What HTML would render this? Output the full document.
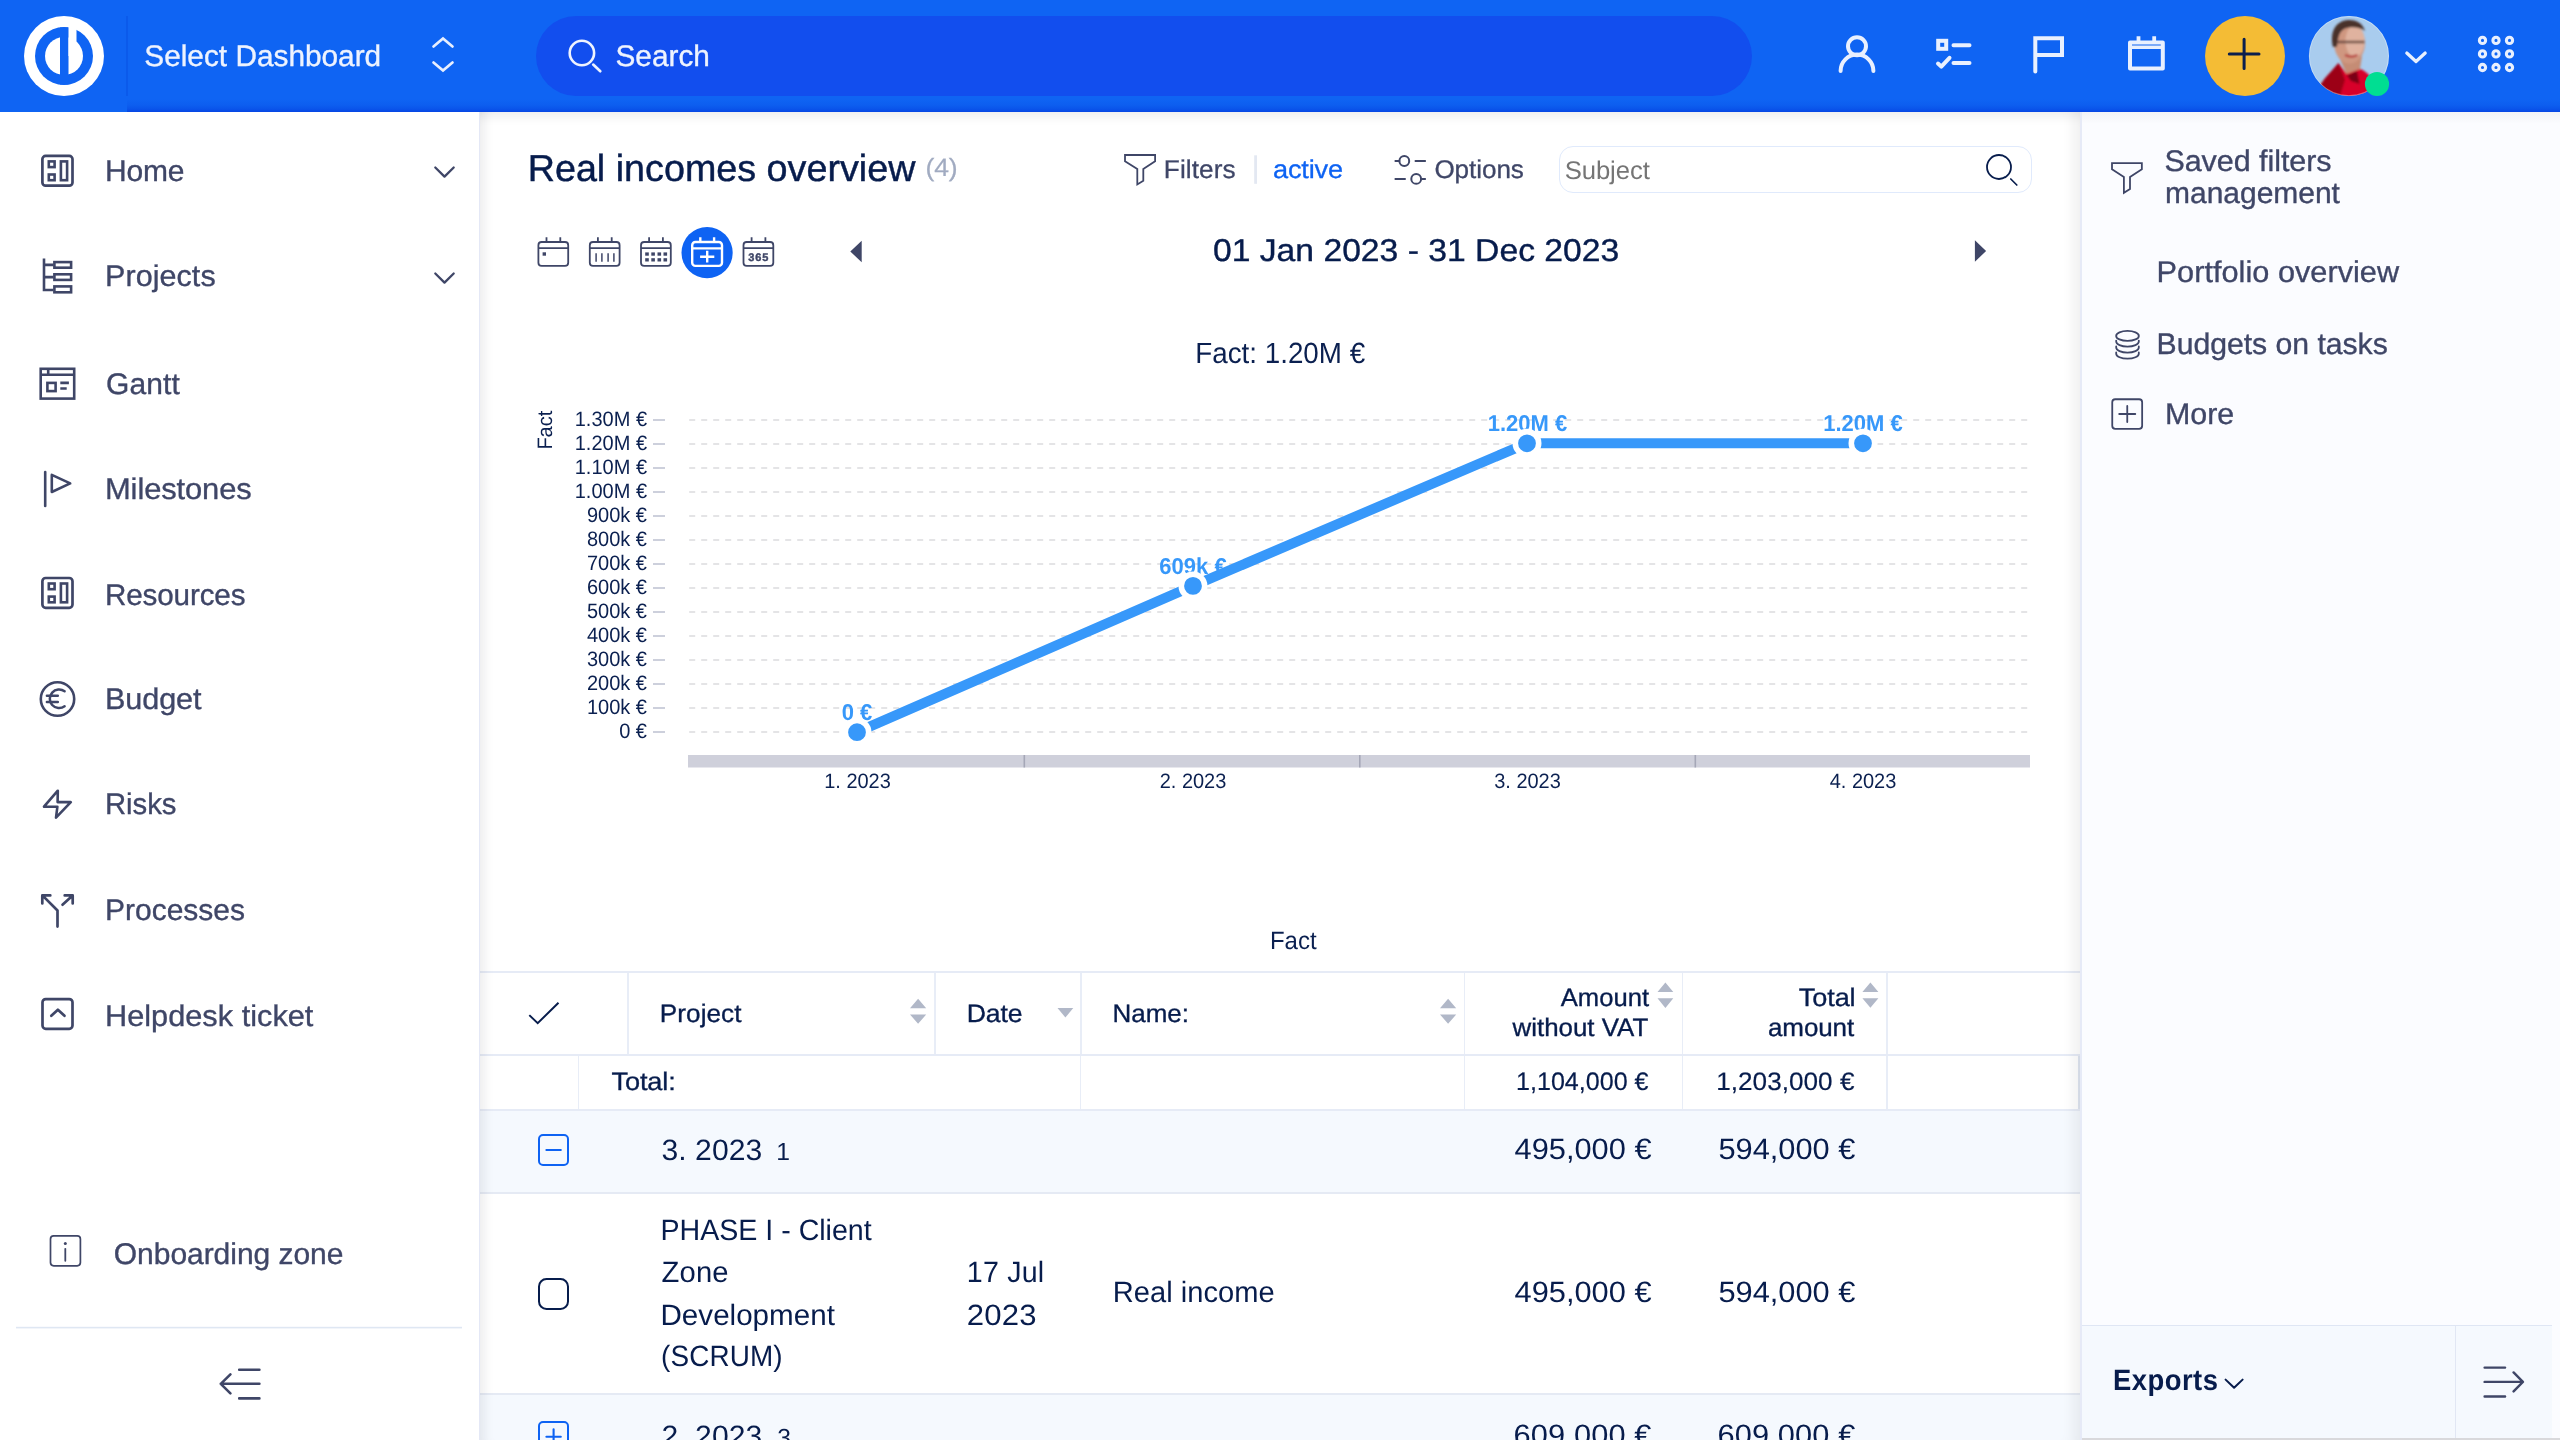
<!DOCTYPE html>
<html lang="en">
<head>
<meta charset="utf-8">
<title>Real incomes overview</title>
<style>
*{box-sizing:border-box;margin:0;padding:0}
html,body{width:2560px;height:1440px;overflow:hidden;background:#fff;font-family:"Liberation Sans",sans-serif}
.t{position:absolute;white-space:pre;line-height:1;font-family:"Liberation Sans",sans-serif}
.tl{position:absolute;left:0;top:0;width:100%;height:100%;will-change:transform;text-rendering:geometricPrecision}
svg{will-change:transform;text-rendering:geometricPrecision}
.abs{position:absolute}
svg{position:absolute;left:0;top:0;overflow:visible}
#top{position:absolute;left:0;top:0;width:2560px;height:112px;background:linear-gradient(#0f64f3 0,#0f64f3 99px,#0d5eef 105px,#0a54ea 109px,#0646e4 112px);z-index:5}
#side{position:absolute;left:0;top:112px;width:480px;height:1328px;background:#fff;border-right:1.400px solid #e4e8f6;z-index:3}
#main{position:absolute;left:480px;top:112px;width:1600px;height:1328px;background:#fff;overflow:hidden;z-index:1}
#right{position:absolute;left:2080px;top:112px;width:480px;height:1328px;background:#fbfcff;z-index:3}
</style>
</head>
<body>

<header id="top">
  <svg width="2560" height="112" viewBox="0 0 2560 112">
    <rect x="0" y="96" width="127" height="16" fill="#0f64f3"/>
    <!-- logo -->
    <circle cx="64" cy="56" r="40" fill="#fff"/>
    <circle cx="64" cy="56" r="29" fill="#0f64f3"/>
    <circle cx="64" cy="56" r="19" fill="#fff"/>
    <rect x="60" y="27.4" width="8.5" height="57.2" fill="#0f64f3"/>
    <rect x="68.5" y="24" width="8" height="32" fill="#fff"/>
    <!-- divider -->
    <rect x="126" y="16" width="2" height="80" fill="#0a52e4" opacity=".55"/>
    <!-- select chevrons -->
    <path d="M433.5 46.5 L443 38.5 L452.500 46.5 M433.5 62.5 L443 70.500 L452.500 62.5" fill="none" stroke="#e8effe" stroke-width="2.7" stroke-linecap="round" stroke-linejoin="miter"/>
    <!-- search pill -->
    <rect x="536" y="16" width="1216" height="80" rx="40" fill="#124eee"/>
    <circle cx="581.9" cy="53" r="12.2" fill="none" stroke="#eef3fe" stroke-width="2.6"/>
    <path d="M593.2 64.6 L600.3 71.2" stroke="#eef3fe" stroke-width="2.7" stroke-linecap="round"/>
    <!-- user -->
    <g fill="none" stroke="#e9f0fe" stroke-width="4" stroke-linecap="round">
      <circle cx="1857" cy="46.3" r="9"/>
      <path d="M1840.600 71 A16.4 16.4 0 0 1 1873.400 71"/>
    </g>
    <!-- tasks -->
    <g fill="none" stroke="#e9f0fe" stroke-width="4" stroke-linecap="round" stroke-linejoin="round">
      <rect x="1938.200" y="40.800" width="8" height="8" stroke-linejoin="miter"/>
      <path d="M1953.500 45.2 H1969.500 M1953.500 63.1 H1969.500"/>
      <path d="M1938 63.500 L1941.300 66.600 L1949.500 57.8"/>
    </g>
    <!-- flag -->
    <path d="M2035.300 71.500 V38.3 H2062 V54.9 H2035.300" fill="none" stroke="#e9f0fe" stroke-width="4" stroke-linecap="round" stroke-linejoin="miter"/>
    <!-- calendar -->
    <g fill="none" stroke="#e9f0fe" stroke-width="4" stroke-linejoin="round">
      <rect x="2130" y="42.5" width="32.8" height="26.1"/>
      <path d="M2130 47.2 H2162.800" stroke-width="3.4"/>
      <path d="M2138.500 36.3 V42 M2154.200 36.3 V42" stroke-width="3.800"/>
    </g>
    <!-- plus -->
    <circle cx="2245" cy="56" r="40" fill="#f4bc35"/>
    <path d="M2229.300 54 H2259 M2244.100 39.200 V68.600" stroke="#0b1f4d" stroke-width="3" stroke-linecap="round"/>
    <!-- avatar -->
    <defs>
      <clipPath id="avc"><circle cx="2349" cy="56" r="40"/></clipPath>
      <filter id="avb" x="-10%" y="-10%" width="120%" height="120%"><feGaussianBlur stdDeviation="1.3"/></filter>
    </defs>
    <g clip-path="url(#avc)">
      <rect x="2305" y="12" width="90" height="90" fill="#a9ccee"/>
      <g filter="url(#avb)">
        <path d="M2316 102 L2321 84 C2326 76 2333 70 2338.500 63 L2346 73 L2358.500 68 C2365 70.500 2370 75 2374 81 L2394 102 Z" fill="#d8002a"/>
        <path d="M2316 102 L2321 84 C2326 76 2333 70 2338.500 63 L2345 80 L2338 102 Z" fill="#9c0016"/>
        <path d="M2347 75.500 L2357 71 L2359.500 84 L2351 81 Z" fill="#7a0012"/>
        <path d="M2338.500 56 L2362 56 L2360 69 L2346.500 74 Z" fill="#c58c75"/>
        <ellipse cx="2349.500" cy="43" rx="15.500" ry="20.500" fill="#cf9780"/>
        <ellipse cx="2355" cy="41" rx="9.500" ry="16" fill="#e6bba9" opacity=".75"/>
        <path d="M2333 47 C2329.500 31 2336 21 2348 20 C2357 19.500 2363 24 2365 31 C2359 26.500 2351 26.500 2345 28.500 C2339 31 2338 38 2337 47 Z" fill="#49312a"/>
        <path d="M2337 42 H2364.500" stroke="#5b3e36" stroke-width="2.600" opacity=".8"/>
        <path d="M2345 55 Q2351 58.200 2357.500 55" stroke="#b8423f" stroke-width="2.200" fill="none"/>
      </g>
    </g>
    <circle cx="2348.900" cy="56" r="39.600" fill="none" stroke="#fff" stroke-opacity=".35" stroke-width="1"/>
    <circle cx="2377" cy="84" r="12.100" fill="#00de92"/>
    <path d="M2406.800 53 L2416 61.500 L2425.200 53" fill="none" stroke="#e9f0fe" stroke-width="3.200" stroke-linecap="round" stroke-linejoin="round"/>
    <!-- apps grid -->
    <g fill="none" stroke="#e9f0fe" stroke-width="3.100">
      <circle cx="2482.500" cy="40.4" r="3.100"/><circle cx="2496" cy="40.4" r="3.100"/><circle cx="2509.500" cy="40.4" r="3.100"/>
      <circle cx="2482.500" cy="53.9" r="3.100"/><circle cx="2496" cy="53.9" r="3.100"/><circle cx="2509.500" cy="53.9" r="3.100"/>
      <circle cx="2482.500" cy="67.500" r="3.100"/><circle cx="2496" cy="67.500" r="3.100"/><circle cx="2509.500" cy="67.500" r="3.100"/>
    </g>
  </svg>
<div class="tl">
<span class="t" style="left:144.3px;top:42px;font-size:29.8px;letter-spacing:0.00px;color:#eef3fe;-webkit-text-stroke:0.35px #eef3fe;">Select Dashboard</span>
<span class="t" style="left:615.5px;top:42px;font-size:29.8px;letter-spacing:0.00px;color:#eef3fe;-webkit-text-stroke:0.35px #eef3fe;">Search</span>
</div>
</header>

<aside id="side">
  <svg width="480" height="1328" viewBox="0 112 480 1328">
    <g fill="none" stroke="#3f4667" stroke-width="2.700" stroke-linecap="round" stroke-linejoin="round">
      <!-- home -->
      <rect x="42.400" y="155.900" width="30.100" height="29.800" rx="3.200"/>
      <g stroke-width="2.600" stroke-linejoin="miter"><rect x="48.800" y="161.400" width="5.800" height="5.700"/><rect x="48.800" y="174.500" width="5.800" height="5.700"/><rect x="60.900" y="161.400" width="6.200" height="18.800"/></g>
      <path d="M435.300 167.500 L444.500 176.600 L453.700 167.500" stroke-width="2.300"/>
      <!-- projects -->
      <g stroke-width="2.600" stroke-linejoin="miter">
        <path d="M44 258.600 V290 H53.500 M44 264.900 H53.500 M44 277.100 H53.500" stroke-linecap="butt"/>
        <rect x="54.400" y="262.100" width="16.700" height="5.600"/><rect x="54.400" y="274.300" width="16.700" height="5.600"/><rect x="54.400" y="286.400" width="16.700" height="5.900"/>
      </g>
      <path d="M435.300 273.500 L444.500 282.600 L453.700 273.500" stroke-width="2.300"/>
      <!-- gantt -->
      <g stroke-width="2.600" stroke-linejoin="miter" stroke-linecap="butt">
        <rect x="40.700" y="368.800" width="33.500" height="29.800"/>
        <path d="M40.700 374.800 H74.200 M48.200 368.800 V374.800"/>
        <rect x="47.400" y="382.900" width="8.200" height="8.200"/>
        <path d="M60.300 382.900 H68.900 M60.300 388.500 H66.700"/>
      </g>
      <!-- milestones -->
      <path d="M45.200 472 V506" stroke-width="2.600"/>
      <path d="M51.800 474.900 L70.200 483.400 L51.800 492 Z" stroke-width="2.600"/>
      <!-- resources -->
      <rect x="42.400" y="578" width="30.100" height="29.800" rx="3.200"/>
      <g stroke-width="2.600" stroke-linejoin="miter"><rect x="48.800" y="583.500" width="5.800" height="5.700"/><rect x="48.800" y="596.600" width="5.800" height="5.700"/><rect x="60.900" y="583.500" width="6.200" height="18.800"/></g>
      <!-- budget -->
      <circle cx="57.500" cy="699" r="16.700" stroke-width="2.600"/>
      <path d="M64.600 691.300 A9.300 9.300 0 1 0 64.600 706.300 M46.900 695.800 H57.800 M46.900 701.900 H57.800" stroke-width="2.500"/>
      <!-- risks -->
      <path d="M57.800 790.700 L44 806.700 H57.400 L56 817.700 L70.800 802.100 H57.600 Z" stroke-width="2.600"/>
      <!-- processes -->
      <path d="M57.500 926.600 V910.500 L42.900 895.900 M62.500 904.700 L72.100 895.900 M42.300 903.400 V895.400 H50.300 M72.700 903.400 V895.400 H64.700" stroke-width="2.700"/>
      <!-- helpdesk -->
      <rect x="42.500" y="999.100" width="30" height="29.700" rx="3.200" stroke-width="2.700"/>
      <path d="M51.300 1015.800 L57.900 1009.700 L64.500 1015.800" stroke-width="2.700"/>
      <!-- onboarding -->
      <rect x="50.500" y="1235.800" width="29.900" height="30" rx="3.200" stroke-width="1.700"/>
      <path d="M65.300 1248.800 V1260.800" stroke-width="1.800"/>
      <circle cx="65.300" cy="1243.500" r="1.500" fill="#3f4667" stroke="none"/>
      <!-- collapse -->
      <path d="M239.200 1369.700 H259.400 M239.200 1398.400 H259.400 M220.800 1383.800 H259.400 M230.400 1374.300 L220.800 1383.800 L230.400 1393.300" stroke-width="2.600"/>
    </g>
    <rect x="16" y="1326.800" width="446" height="1.600" fill="#dfe7f3"/>
  </svg>

<div class="tl">
<span class="t" style="left:105.0px;top:45px;font-size:30.0px;letter-spacing:-0.17px;color:#3f4667;transform:scaleY(0.9935);transform-origin:0 24px;-webkit-text-stroke:0.35px #3f4667;">Home</span>
<span class="t" style="left:105.0px;top:149px;font-size:30.5px;letter-spacing:0.07px;color:#3f4667;transform:scaleY(0.9767);transform-origin:0 25px;-webkit-text-stroke:0.35px #3f4667;">Projects</span>
<span class="t" style="left:106.0px;top:258px;font-size:30.0px;letter-spacing:0.12px;color:#3f4667;transform:scaleY(0.9931);transform-origin:0 24px;-webkit-text-stroke:0.35px #3f4667;">Gantt</span>
<span class="t" style="left:105.0px;top:362px;font-size:30.9px;letter-spacing:-0.11px;color:#3f4667;transform:scaleY(0.9653);transform-origin:0 25px;-webkit-text-stroke:0.35px #3f4667;">Milestones</span>
<span class="t" style="left:105.0px;top:469px;font-size:29.6px;letter-spacing:-0.12px;color:#3f4667;transform:scaleY(1.0072);transform-origin:0 24px;-webkit-text-stroke:0.35px #3f4667;">Resources</span>
<span class="t" style="left:105.0px;top:572px;font-size:30.6px;letter-spacing:-0.10px;color:#3f4667;transform:scaleY(0.9735);transform-origin:0 25px;-webkit-text-stroke:0.35px #3f4667;">Budget</span>
<span class="t" style="left:105.0px;top:678px;font-size:29.3px;letter-spacing:-0.05px;color:#3f4667;transform:scaleY(1.0174);transform-origin:0 24px;-webkit-text-stroke:0.35px #3f4667;">Risks</span>
<span class="t" style="left:105.0px;top:784px;font-size:30.0px;letter-spacing:0.00px;color:#3f4667;transform:scaleY(0.9927);transform-origin:0 24px;-webkit-text-stroke:0.35px #3f4667;">Processes</span>
<span class="t" style="left:105.0px;top:889px;font-size:30.7px;letter-spacing:0.02px;color:#3f4667;transform:scaleY(0.9695);transform-origin:0 25px;-webkit-text-stroke:0.35px #3f4667;">Helpdesk ticket</span>
<span class="t" style="left:113.8px;top:1128px;font-size:30.0px;letter-spacing:-0.04px;color:#3f4667;transform:scaleY(0.9982);transform-origin:0 24px;-webkit-text-stroke:0.35px #3f4667;">Onboarding zone</span>
</div>
</aside>

<main id="main">
  <!-- subject search input -->
  <div class="abs" style="left:1078.800px;top:33.700px;width:473.300px;height:47.700px;border:1.600px solid #e0eafc;border-radius:14px;background:#fff"></div>

  <!-- table backgrounds / borders -->
  <section id="tbl">
    <div class="abs" style="left:0;top:859px;width:1600px;height:2px;background:#e6ebf6"></div>
    <div class="abs" style="left:0;top:942px;width:1600px;height:2px;background:#e6ebf6"></div>
    <div class="abs" style="left:0;top:996.500px;width:1600px;height:2px;background:#e6ebf6"></div>
    <div class="abs" style="left:0;top:998.500px;width:1600px;height:81.500px;background:#f5f9fe"></div>
    <div class="abs" style="left:0;top:1080px;width:1600px;height:1.600px;background:#e5eaf4"></div>
    <div class="abs" style="left:0;top:1281px;width:1600px;height:1.600px;background:#e5eaf4"></div>
    <div class="abs" style="left:0;top:1282.600px;width:1600px;height:46px;background:#f5f9fe"></div>
    <!-- header vertical dividers -->
    <div class="abs" style="left:147.200px;top:861px;width:1.700px;height:81px;background:#e8edf7"></div>
    <div class="abs" style="left:454.200px;top:861px;width:1.700px;height:81px;background:#e8edf7"></div>
    <div class="abs" style="left:600.400px;top:861px;width:1.700px;height:81px;background:#e8edf7"></div>
    <div class="abs" style="left:983.700px;top:861px;width:1.700px;height:81px;background:#e8edf7"></div>
    <div class="abs" style="left:1201.600px;top:861px;width:1.700px;height:81px;background:#e8edf7"></div>
    <div class="abs" style="left:1406.300px;top:861px;width:1.700px;height:81px;background:#e8edf7"></div>
    <!-- total row vertical dividers -->
    <div class="abs" style="left:97.500px;top:944px;width:1.700px;height:52.500px;background:#e8edf7"></div>
    <div class="abs" style="left:599.700px;top:944px;width:1.700px;height:52.500px;background:#e8edf7"></div>
    <div class="abs" style="left:983.700px;top:944px;width:1.700px;height:52.500px;background:#e8edf7"></div>
    <div class="abs" style="left:1201.600px;top:944px;width:1.700px;height:52.500px;background:#e8edf7"></div>
    <div class="abs" style="left:1406.300px;top:944px;width:1.700px;height:52.500px;background:#e8edf7"></div>
    <div class="abs" style="left:1598.200px;top:944px;width:1.700px;height:52.500px;background:#dfe5f1"></div>
    <!-- group toggles + checkbox -->
    <div class="abs" style="left:57.600px;top:1022.100px;width:31.600px;height:31.600px;border:2.200px solid #0e63f3;border-radius:5px"></div>
    <div class="abs" style="left:58px;top:1166.300px;width:31.300px;height:31.300px;border:2px solid #071c4c;border-radius:8.500px;background:#fff"></div>
    <div class="abs" style="left:57.600px;top:1308.800px;width:31.600px;height:31.600px;border:2.200px solid #0e63f3;border-radius:5px"></div>
  </section>
  <!-- inner shadows -->
  <div class="abs" style="left:0;top:0;width:1600px;height:1328px;box-shadow:inset 13px 0 11px -9px rgba(20,20,40,.085),inset 0 13px 11px -9px rgba(20,20,40,.085),inset -17px 0 14px -11px rgba(10,10,20,.065);pointer-events:none"></div>

  <svg width="1600" height="1328" viewBox="480 112 1600 1328">
    <!-- filters funnel -->
    <g fill="none" stroke="#3f4667" stroke-width="1.800" stroke-linecap="round" stroke-linejoin="miter">
      <path d="M1125 155 H1155.100 V161.200 L1143.300 169 V180.800 L1137.300 184.400 V169 L1125 161.200 Z"/>
      <!-- options -->
      <g stroke-width="2"><circle cx="1404.300" cy="161" r="4.900"/><path d="M1395.400 161 H1399.300 M1415.500 161 H1425.100"/>
      <circle cx="1416.200" cy="178.900" r="4.900"/><path d="M1395.400 178.900 H1405 M1421.200 178.900 H1425.100"/></g>
    </g>
    <rect x="1254.200" y="155.300" width="2.800" height="28.500" fill="#e3e8f2"/>
    <!-- subject search icon -->
    <circle cx="1999" cy="167" r="12" fill="none" stroke="#071c4c" stroke-width="1.800"/>
    <path d="M2010.800 179 L2016.800 185" stroke="#071c4c" stroke-width="1.700" stroke-linecap="round"/>

    <!-- period icons -->
    <g fill="none" stroke="#3f4667" stroke-width="1.800" stroke-linejoin="round">
      <g id="cal"><rect x="538.400" y="242" width="29.800" height="23.900" rx="3.200"/><path d="M538.400 248.200 H568.200 M546.500 237.200 V242 M560.300 237.200 V242"/></g>
      <rect x="542.600" y="252.300" width="3.400" height="3.400" fill="#3f4667" stroke="none"/>
      <g transform="translate(51.400 0)"><rect x="538.400" y="242" width="29.800" height="23.900" rx="3.200"/><path d="M538.400 248.200 H568.200 M546.500 237.200 V242 M560.300 237.200 V242"/>
        <path d="M544.700 253.300 V261.700 M550.500 253.300 V261.700 M556.700 253.300 V261.700 M562.500 253.300 V261.700" stroke-width="1.500"/></g>
      <g transform="translate(102.600 0)"><rect x="538.400" y="242" width="29.800" height="23.900" rx="3.200"/><path d="M538.400 248.200 H568.200 M546.500 237.200 V242 M560.300 237.200 V242"/>
        <g fill="#3f4667" stroke="none"><rect x="542.600" y="252.400" width="3.600" height="3.300"/><rect x="548.700" y="252.400" width="3.600" height="3.300"/><rect x="554.900" y="252.400" width="3.600" height="3.300"/><rect x="560.900" y="252.400" width="3.600" height="3.300"/>
        <rect x="542.600" y="258.200" width="3.600" height="3.300"/><rect x="548.700" y="258.200" width="3.600" height="3.300"/><rect x="554.900" y="258.200" width="3.600" height="3.300"/><rect x="560.900" y="258.200" width="3.600" height="3.300"/></g></g>
      <g transform="translate(205.100 0)"><rect x="538.400" y="242" width="29.800" height="23.900" rx="3.200"/><path d="M538.400 248.200 H568.200 M546.500 237.200 V242 M560.300 237.200 V242"/></g>
    </g>
    <circle cx="707.100" cy="252.700" r="25.600" fill="#0e63f3"/>
    <g fill="none" stroke="#fff" stroke-width="2.400" stroke-linejoin="round">
      <rect x="692.200" y="242" width="29.800" height="23.900" rx="3.200"/><path d="M692.200 248.400 H722 M700.300 237.200 V242 M714.100 237.200 V242 M700.100 256.700 H714.300 M707.200 250.800 V262.600"/>
    </g>
    <text x="758.700" y="261.200" font-family="Liberation Sans, sans-serif" font-weight="700" font-size="11" fill="#3f4667" stroke="#3f4667" stroke-width=".4" text-anchor="middle" letter-spacing=".9">365</text>
    <path d="M850.300 251.500 L861.700 240.800 V262.300 Z M1986.100 251 L1974.900 240.200 V261.800 Z" fill="#3f4667"/>

    <!-- chart -->
    <g id="chart" font-family="Liberation Sans, sans-serif" fill="#0b2050">
      <text transform="translate(1280.2 363) scale(0.992 1.045)" font-size="28" text-anchor="middle">Fact: 1.20M €</text>
      <text transform="translate(552 449.6) rotate(-90) scale(1 1.045)" font-size="20">Fact</text>
      <g><text transform="translate(647 426.2) scale(1 1.045)" font-size="20" text-anchor="end">1.30M €</text><text transform="translate(647 450.2) scale(1 1.045)" font-size="20" text-anchor="end">1.20M €</text><text transform="translate(647 474.2) scale(1 1.045)" font-size="20" text-anchor="end">1.10M €</text><text transform="translate(647 498.2) scale(1 1.045)" font-size="20" text-anchor="end">1.00M €</text><text transform="translate(647 522.2) scale(1 1.045)" font-size="20" text-anchor="end">900k €</text><text transform="translate(647 546.2) scale(1 1.045)" font-size="20" text-anchor="end">800k €</text><text transform="translate(647 570.2) scale(1 1.045)" font-size="20" text-anchor="end">700k €</text><text transform="translate(647 594.2) scale(1 1.045)" font-size="20" text-anchor="end">600k €</text><text transform="translate(647 618.2) scale(1 1.045)" font-size="20" text-anchor="end">500k €</text><text transform="translate(647 642.2) scale(1 1.045)" font-size="20" text-anchor="end">400k €</text><text transform="translate(647 666.2) scale(1 1.045)" font-size="20" text-anchor="end">300k €</text><text transform="translate(647 690.2) scale(1 1.045)" font-size="20" text-anchor="end">200k €</text><text transform="translate(647 714.2) scale(1 1.045)" font-size="20" text-anchor="end">100k €</text><text transform="translate(647 738.2) scale(1 1.045)" font-size="20" text-anchor="end">0 €</text></g>
      <path d="M653 420h12M653 444h12M653 468h12M653 492h12M653 516h12M653 540h12M653 564h12M653 588h12M653 612h12M653 636h12M653 660h12M653 684h12M653 708h12M653 732h12" stroke="#cdd0dc" stroke-width="2" fill="none"/>
      <path d="M689.2 420H2030M689.2 444H2030M689.2 468H2030M689.2 492H2030M689.2 516H2030M689.2 540H2030M689.2 564H2030M689.2 588H2030M689.2 612H2030M689.2 636H2030M689.2 660H2030M689.2 684H2030M689.2 708H2030M689.2 732H2030" stroke="#e4e4e6" stroke-width="2" stroke-dasharray="6 6" fill="none"/>
      <rect x="688" y="755" width="1342" height="12.5" fill="#cfd0db"/>
      <path d="M1024.3 755V767.5M1359.8 755V767.5M1695.3 755V767.5" stroke="#a5a7b7" stroke-width="1.6"/>
      <g><text transform="translate(857.5 787.8) scale(1 1.045)" font-size="20" text-anchor="middle">1. 2023</text><text transform="translate(1193 787.8) scale(1 1.045)" font-size="20" text-anchor="middle">2. 2023</text><text transform="translate(1527.5 787.8) scale(1 1.045)" font-size="20" text-anchor="middle">3. 2023</text><text transform="translate(1863 787.8) scale(1 1.045)" font-size="20" text-anchor="middle">4. 2023</text></g>
      <g font-weight="700" fill="#3798fa"><text transform="translate(857 719.6) scale(1 1.045)" font-size="22" text-anchor="middle">0 €</text><text transform="translate(1193 574) scale(1 1.045)" font-size="22" text-anchor="middle">609k €</text><text transform="translate(1527.5 430.9) scale(1 1.045)" font-size="22" text-anchor="middle">1.20M €</text><text transform="translate(1863 430.9) scale(1 1.045)" font-size="22" text-anchor="middle">1.20M €</text></g>
      <path d="M857 732.2 L1193 585.9 L1527 443.3 L1863 443.3" fill="none" stroke="#3798fa" stroke-width="10" stroke-linejoin="round"/>
      <g fill="#3798fa" stroke="#fff" stroke-width="5.6"><circle cx="857" cy="732.2" r="11.7"/><circle cx="1193" cy="585.9" r="11.7"/><circle cx="1527" cy="443.3" r="11.7"/><circle cx="1863" cy="443.3" r="11.7"/></g>
      <text transform="translate(1293.3 949) scale(1 1.045)" font-size="24" text-anchor="middle">Fact</text>
    </g>

    <!-- table icons -->
    <path d="M529.300 1015.100 L537.700 1023.200 L558.500 1002.800" fill="none" stroke="#071c4c" stroke-width="2" stroke-linecap="butt" stroke-linejoin="miter"/>
    <g fill="#b1b8c8">
      <path d="M910 1008.200 L918.100 998.800 L926.200 1008.200 Z M910 1014.500 L918.100 1023.800 L926.200 1014.500 Z"/>
      <path d="M1057.500 1008 L1065.400 1017.500 L1073.300 1008 Z"/>
      <path d="M1440 1008.200 L1448.100 998.800 L1456.200 1008.200 Z M1440 1014.500 L1448.100 1023.800 L1456.200 1014.500 Z"/>
      <path d="M1657.500 992 L1665.400 982.500 L1673.300 992 Z M1657.500 998.300 L1665.400 1007.900 L1673.300 998.300 Z"/>
      <path d="M1862.400 992 L1870.400 982.500 L1878.400 992 Z M1862.400 998.300 L1870.400 1007.700 L1878.400 998.300 Z"/>
    </g>
    <path d="M546.400 1150 H560.800 M546.400 1436.700 H560.800 M553.600 1429.300 V1444" stroke="#0e63f3" stroke-width="2.100" stroke-linecap="round"/>
  </svg>

<div class="tl">
<span class="t" style="left:47.7px;top:38px;font-size:37.7px;letter-spacing:0.01px;color:#071c4c;transform:scaleY(0.994);transform-origin:0 31px;-webkit-text-stroke:0.45px #071c4c;">Real incomes overview</span>
<span class="t" style="left:445.5px;top:42px;font-size:26.6px;letter-spacing:-0.15px;color:#a1abc1;transform:scaleY(0.9408);transform-origin:0 22px;-webkit-text-stroke:0.25px #a1abc1;">(4)</span>
<span class="t" style="left:683.8px;top:44px;font-size:26.2px;letter-spacing:0.10px;color:#3f4667;transform:scaleY(0.9767);transform-origin:0 22px;-webkit-text-stroke:0.3px #3f4667;">Filters</span>
<span class="t" style="left:793.0px;top:43px;font-size:27.2px;letter-spacing:-0.18px;color:#0e63f3;transform:scaleY(0.9398);transform-origin:0 23px;-webkit-text-stroke:0.3px #0e63f3;">active</span>
<span class="t" style="left:954.4px;top:44px;font-size:26.1px;letter-spacing:-0.07px;color:#3f4667;transform:scaleY(0.9817);transform-origin:0 22px;-webkit-text-stroke:0.3px #3f4667;">Options</span>
<span class="t" style="left:1084.7px;top:47px;font-size:25.7px;letter-spacing:-0.10px;color:#757575;transform:scaleY(0.9953);transform-origin:0 20px;">Subject</span>
<span class="t" style="left:732.9px;top:122px;font-size:33.7px;letter-spacing:0.00px;color:#071c4c;transform:scaleY(0.9356);transform-origin:0 27px;-webkit-text-stroke:0.4px #071c4c;">01 Jan 2023 - 31 Dec 2023</span>
<span class="t" style="left:179.8px;top:888px;font-size:26.1px;letter-spacing:0.08px;color:#071c4c;transform:scaleY(0.9686);transform-origin:0 22px;-webkit-text-stroke:0.35px #071c4c;">Project</span>
<span class="t" style="left:486.8px;top:888px;font-size:26.6px;letter-spacing:-0.17px;color:#071c4c;transform:scaleY(0.9524);transform-origin:0 22px;-webkit-text-stroke:0.35px #071c4c;">Date</span>
<span class="t" style="left:632.5px;top:888px;font-size:26.0px;letter-spacing:-0.05px;color:#071c4c;transform:scaleY(0.9749);transform-origin:0 22px;-webkit-text-stroke:0.35px #071c4c;">Name:</span>
<span class="t" style="left:1080.8px;top:874px;font-size:25.6px;letter-spacing:0.00px;color:#071c4c;transform:scaleY(0.9886);transform-origin:0 20px;-webkit-text-stroke:0.35px #071c4c;">Amount</span>
<span class="t" style="left:1032.5px;top:904px;font-size:25.9px;letter-spacing:0.00px;color:#071c4c;transform:scaleY(0.9778);transform-origin:0 20px;-webkit-text-stroke:0.35px #071c4c;">without VAT</span>
<span class="t" style="left:1318.8px;top:871px;font-size:27.1px;letter-spacing:-0.10px;color:#071c4c;transform:scaleY(0.9341);transform-origin:0 23px;-webkit-text-stroke:0.35px #071c4c;">Total</span>
<span class="t" style="left:1288.0px;top:902px;font-size:26.0px;letter-spacing:-0.12px;color:#071c4c;transform:scaleY(0.9719);transform-origin:0 22px;-webkit-text-stroke:0.35px #071c4c;">amount</span>
<span class="t" style="left:131.5px;top:955px;font-size:27.2px;letter-spacing:-0.14px;color:#071c4c;transform:scaleY(0.93);transform-origin:0 23px;-webkit-text-stroke:0.35px #071c4c;">Total:</span>
<span class="t" style="left:1036.0px;top:958px;font-size:25.1px;letter-spacing:0.00px;color:#071c4c;transform:scaleY(1.0077);transform-origin:0 20px;-webkit-text-stroke:0.2px #071c4c;">1,104,000 €</span>
<span class="t" style="left:1236.2px;top:956px;font-size:26.1px;letter-spacing:0.04px;color:#071c4c;transform:scaleY(0.9675);transform-origin:0 22px;-webkit-text-stroke:0.2px #071c4c;">1,203,000 €</span>
<span class="t" style="left:181.5px;top:1024px;font-size:30.1px;letter-spacing:0.05px;color:#071c4c;transform:scaleY(0.9766);transform-origin:0 24px;">3. 2023</span>
<span class="t" style="left:296.3px;top:1029px;font-size:24.7px;letter-spacing:0.00px;color:#071c4c;">1</span>
<span class="t" style="left:1034.5px;top:1022px;font-size:30.8px;letter-spacing:0.00px;color:#071c4c;transform:scaleY(0.9556);transform-origin:0 25px;">495,000 €</span>
<span class="t" style="left:1238.4px;top:1022px;font-size:30.8px;letter-spacing:0.00px;color:#071c4c;transform:scaleY(0.9556);transform-origin:0 25px;">594,000 €</span>
<span class="t" style="left:180.5px;top:1105px;font-size:28.6px;letter-spacing:-0.01px;color:#071c4c;transform:scaleY(1.0297);transform-origin:0 23px;">PHASE I - Client</span>
<span class="t" style="left:181.5px;top:1147px;font-size:29.2px;letter-spacing:0.17px;color:#071c4c;transform:scaleY(1.0078);transform-origin:0 23px;">Zone</span>
<span class="t" style="left:180.5px;top:1189px;font-size:29.6px;letter-spacing:0.00px;color:#071c4c;transform:scaleY(0.9942);transform-origin:0 24px;">Development</span>
<span class="t" style="left:181.0px;top:1231px;font-size:27.9px;letter-spacing:0.13px;color:#071c4c;transform:scaleY(1.0526);transform-origin:0 23px;">(SCRUM)</span>
<span class="t" style="left:486.8px;top:1147px;font-size:28.6px;letter-spacing:0.20px;color:#071c4c;transform:scaleY(1.0274);transform-origin:0 23px;">17 Jul</span>
<span class="t" style="left:486.8px;top:1187px;font-size:31.1px;letter-spacing:0.23px;color:#071c4c;transform:scaleY(0.9445);transform-origin:0 26px;">2023</span>
<span class="t" style="left:632.8px;top:1167px;font-size:29.1px;letter-spacing:0.02px;color:#071c4c;transform:scaleY(1.0114);transform-origin:0 23px;">Real income</span>
<span class="t" style="left:1034.5px;top:1165px;font-size:30.8px;letter-spacing:0.00px;color:#071c4c;transform:scaleY(0.9556);transform-origin:0 25px;">495,000 €</span>
<span class="t" style="left:1238.4px;top:1165px;font-size:30.8px;letter-spacing:0.00px;color:#071c4c;transform:scaleY(0.9556);transform-origin:0 25px;">594,000 €</span>
<span class="t" style="left:181.5px;top:1310px;font-size:30.1px;letter-spacing:0.05px;color:#071c4c;transform:scaleY(0.9766);transform-origin:0 24px;">2. 2023</span>
<span class="t" style="left:297.3px;top:1315px;font-size:24.7px;letter-spacing:0.00px;color:#071c4c;">3</span>
<span class="t" style="left:1033.5px;top:1308px;font-size:30.8px;letter-spacing:0.12px;color:#071c4c;transform:scaleY(0.9556);transform-origin:0 25px;">609,000 €</span>
<span class="t" style="left:1237.4px;top:1308px;font-size:30.8px;letter-spacing:0.12px;color:#071c4c;transform:scaleY(0.9556);transform-origin:0 25px;">609,000 €</span>
</div>
</main>

<aside id="right">
  <div class="abs" style="left:0;top:0;width:480px;height:12px;background:linear-gradient(rgba(40,40,70,.045),rgba(40,40,70,0))"></div>
  <div class="abs" style="left:0;top:0;width:1.600px;height:1328px;background:#e6eaf7"></div>
  <div class="abs" style="left:2px;top:1213px;width:470px;height:113px;background:#f5f9fe;border-top:1.600px solid #dfe6f4"></div>
  <div class="abs" style="left:374.700px;top:1214px;width:1.600px;height:112px;background:#e1e7f4"></div>
  <div class="abs" style="left:2px;top:1326px;width:478px;height:2px;background:#d9d9dc"></div>
  <svg width="480" height="1328" viewBox="2080 112 480 1328">
    <g fill="none" stroke="#3f4667" stroke-width="1.800" stroke-linecap="round" stroke-linejoin="round">
      <!-- funnel -->
      <path d="M2112 163.050 H2141.850 V169.300 L2130 176.900 V188.900 L2123.900 192.800 V176.900 L2112 169.300 Z" stroke-linejoin="miter"/>
      <!-- coins -->
      <ellipse cx="2127.500" cy="335.900" rx="11.350" ry="4.950"/>
      <path d="M2116.200 340.600 v1 a11.300 5 0 0 0 22.600 0 v-1 M2116.200 346.500 v1.100 a11.300 5 0 0 0 22.600 0 v-1.100 M2116.200 352.400 v1.300 a11.300 5 0 0 0 22.600 0 v-1.300"/>
      <!-- more -->
      <rect x="2112.250" y="399.250" width="29.900" height="29.600" rx="3"/>
      <path d="M2119.200 414 H2135.300 M2127.250 406 V422"/>
      <!-- exports chevron -->
      <path d="M2225.600 1379.600 L2234.100 1387.700 L2242.600 1379.600" stroke="#071c4c" stroke-width="2"/>
      <!-- collapse right -->
      <path d="M2484.600 1367.600 H2505.100 M2484.600 1396.500 H2505.100 M2484.600 1381.900 H2522.700 M2513.600 1372.400 L2522.900 1381.900 L2513.600 1391.400" stroke-width="2.400"/>
    </g>
  </svg>

<div class="tl">
<span class="t" style="left:84.4px;top:34px;font-size:30.5px;letter-spacing:-0.05px;color:#3f4667;transform:scaleY(0.9732);transform-origin:0 25px;-webkit-text-stroke:0.35px #3f4667;">Saved filters</span>
<span class="t" style="left:85.0px;top:67px;font-size:30.0px;letter-spacing:-0.02px;color:#3f4667;transform:scaleY(0.9896);transform-origin:0 24px;-webkit-text-stroke:0.35px #3f4667;">management</span>
<span class="t" style="left:76.6px;top:145px;font-size:30.7px;letter-spacing:0.02px;color:#3f4667;transform:scaleY(0.9738);transform-origin:0 25px;-webkit-text-stroke:0.35px #3f4667;">Portfolio overview</span>
<span class="t" style="left:76.6px;top:218px;font-size:30.2px;letter-spacing:-0.03px;color:#3f4667;transform:scaleY(0.9886);transform-origin:0 24px;-webkit-text-stroke:0.35px #3f4667;">Budgets on tasks</span>
<span class="t" style="left:84.9px;top:287px;font-size:30.4px;letter-spacing:0.03px;color:#3f4667;transform:scaleY(0.9834);transform-origin:0 25px;-webkit-text-stroke:0.35px #3f4667;">More</span>
<span class="t" style="left:33.0px;top:1255px;font-size:27.4px;letter-spacing:0.48px;color:#071c4c;font-weight:700;transform:scaleY(1.075);transform-origin:0 23px;">Exports</span>
</div>
</aside>

</body>
</html>
